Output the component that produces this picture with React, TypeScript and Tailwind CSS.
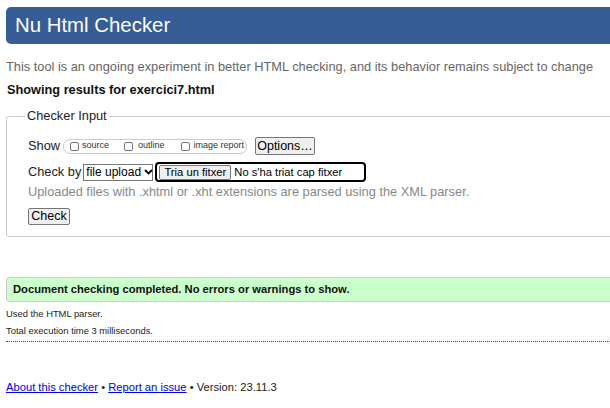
export default function App() {
  const Box = () => (
    <span className="inline-block w-[9px] h-[9px] border border-[#767676] rounded-[2px] bg-white" />
  );
  return (
    <div className="w-[610px] h-[408px] overflow-hidden bg-white text-black font-['Liberation_Sans',Arial,sans-serif]">
      <div className="mt-[7px] ml-[6px] w-[620px] h-[37px] bg-[#365d95] rounded-l-[5px] flex items-center pl-[9px] text-white text-[20.4px]">
        Nu Html Checker
      </div>
      <div className="mt-[15px] ml-[6px] h-[16px] leading-[16px] text-[12.8px] text-[#666] whitespace-nowrap">
        This tool is an ongoing experiment in better HTML checking, and its behavior remains subject to change
      </div>
      <div className="mt-[7px] ml-[7px] h-[16px] leading-[16px] text-[12.75px] font-bold text-[#111]">
        Showing results for exercici7.html
      </div>
      <fieldset className="mt-[10px] ml-[6px] w-[620px] border border-[#ccc] rounded-[3px] pl-[21px] pb-[11px]">
        <legend className="-ml-[3px] px-[2px] text-[12.8px] leading-[16px] text-[#222]">Checker Input</legend>
        <div className="mt-[13px] h-[18px] flex items-center text-[12.8px] text-[#222]">
          <span>Show</span>
          <div className="ml-[3px] h-[15px] w-[184px] border border-[#ccc] rounded-[7px] flex items-center text-[9px] text-[#333] whitespace-nowrap">
            <span className="ml-[6px] flex"><Box /></span>
            <span className="ml-[3px]">source</span>
            <span className="ml-[15px] flex"><Box /></span>
            <span className="ml-[5px]">outline</span>
            <span className="ml-[16px] flex"><Box /></span>
            <span className="ml-[4px]">image report</span>
          </div>
          <div className="ml-[8px] h-[18px] w-[60px] border border-[#767676] rounded-[2px] bg-[#efefef] flex items-center justify-center text-[12.5px] text-black">
            Options…
          </div>
        </div>
        <div className="mt-[7px] h-[20px] flex items-center text-[12.8px] text-[#222]">
          <span>Check by</span>
          <div className="ml-[2px] h-[17px] w-[70px] border border-[#767676] flex items-center pl-[2px] text-[12px] text-black bg-white whitespace-nowrap">
            <span>file upload</span>
            <svg className="ml-[3px] shrink-0" width="9" height="6" viewBox="0 0 9 6">
              <path d="M1 1 L4.5 4.5 L8 1" fill="none" stroke="#000" strokeWidth="1.8" />
            </svg>
          </div>
          <div className="ml-[2px] h-[20px] w-[211px] border-2 border-black rounded-[4px] flex items-center pl-[2px] text-[11.2px] text-black whitespace-nowrap">
            <div className="h-[15px] w-[72px] border border-[#767676] rounded-[2px] bg-[#efefef] flex items-center justify-center">
              Tria un fitxer
            </div>
            <span className="ml-[3px]">No s'ha triat cap fitxer</span>
          </div>
        </div>
        <div className="mt-[2px] h-[16px] leading-[16px] text-[12.8px] text-[#888] whitespace-nowrap">
          Uploaded files with .xhtml or .xht extensions are parsed using the XML parser.
        </div>
        <div className="mt-[8px] h-[17px] w-[42px] border border-[#767676] rounded-[2px] bg-[#efefef] flex items-center justify-center text-[12.5px] text-black">
          Check
        </div>
      </fieldset>
      <div className="mt-[40px] ml-[6px] w-[620px] h-[25px] bg-[#ccffcc] border border-[#ccc] rounded-l-[3px] flex items-center pl-[6px] text-[11.2px] font-bold text-[#111]">
        Document checking completed. No errors or warnings to show.
      </div>
      <div className="mt-[5px] ml-[6px] h-[13px] leading-[13px] text-[9.4px] text-[#222]">Used the HTML parser.</div>
      <div className="mt-[4px] ml-[6px] h-[13px] leading-[13px] text-[9.4px] text-[#222]">Total execution time 3 milliseconds.</div>
      <div className="mt-[4px] ml-[6px] w-[620px] border-t border-dotted border-[#444]" />
      <div className="mt-[37px] ml-[6px] h-[16px] leading-[16px] text-[11.2px] text-[#222] whitespace-nowrap">
        <a href="#" className="text-[#0000ee] underline">About this checker</a>
        {" • "}
        <a href="#" className="text-[#0000ee] underline">Report an issue</a>
        {" • Version: 23.11.3"}
      </div>
    </div>
  );
}
